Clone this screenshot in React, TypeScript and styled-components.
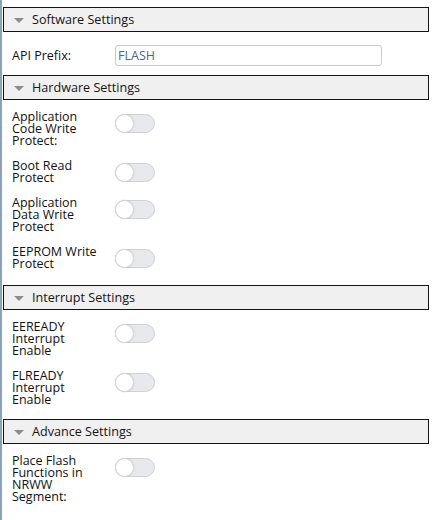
import React from "react";
import styled, { createGlobalStyle } from "styled-components";

const GlobalStyle = createGlobalStyle`
  html, body {
    margin: 0;
    padding: 0;
    background: #ffffff;
  }
  body {
    font-family: "Open Sans", "Noto Sans", sans-serif;
    font-size: 12.5px;
    color: #111111;
  }
`;

const Page = styled.div`
  box-sizing: border-box;
  min-height: 100vh;
  border-left: 2px solid #8da2b9;
  padding: 7px 5px 0 1px;
`;

const Section = styled.section`
  display: flex;
  flex-direction: column;
`;

const Header = styled.div`
  box-sizing: border-box;
  height: 25px;
  display: flex;
  align-items: center;
  gap: 8px;
  padding-left: 10px;
  border: 1px solid #141414;
  background: #f0f0f0;
  color: #151515;
  font-size: 12.6px;
  cursor: pointer;
  user-select: none;
`;

const Caret = styled.span`
  width: 0;
  height: 0;
  border-left: 5px solid transparent;
  border-right: 5px solid transparent;
  border-top: 5px solid #8c8c8c;
  margin-top: 1px;
`;

const Body = styled.div<{ $tail?: number }>`
  display: flex;
  flex-direction: column;
  padding: 4px 0 ${(p) => p.$tail ?? 8}px;
`;

const Row = styled.div<{ $input?: boolean }>`
  display: flex;
  align-items: ${(p) => (p.$input ? "center" : "flex-start")};
  padding: ${(p) => (p.$input ? "9px 0 1px" : "7px 0 6px")};
`;

const Label = styled.label`
  box-sizing: border-box;
  flex: 0 0 112px;
  padding: 0 14px 0 9px;
  line-height: 12px;
  color: #111111;
`;

const TextInput = styled.input`
  box-sizing: border-box;
  width: 267px;
  height: 21px;
  padding: 0 2px;
  border: 1px solid #c9c9c9;
  border-radius: 3px;
  background: #ffffff;
  font-family: inherit;
  font-size: 12.5px;
  color: #4b6886;
  outline: none;
`;

const Switch = styled.label`
  position: relative;
  display: inline-block;
  flex: 0 0 auto;
  width: 40px;
  height: 19px;
  margin-top: 3px;
  cursor: pointer;

  input {
    position: absolute;
    opacity: 0;
    width: 0;
    height: 0;
  }
`;

const Track = styled.span`
  position: absolute;
  inset: 0;
  box-sizing: border-box;
  border: 1px solid #cfd1d4;
  border-radius: 10px;
  background: #e7e9ec;
  transition: background 0.2s;

  &::before {
    content: "";
    position: absolute;
    top: -1px;
    left: -1px;
    width: 19px;
    height: 19px;
    box-sizing: border-box;
    border-radius: 50%;
    background: #ffffff;
    border: 1px solid #d6d6d6;
    box-shadow: 0 0 2px rgba(0, 0, 0, 0.12);
    transition: transform 0.2s;
  }

  input:checked + & {
    background: #6a9bd1;
  }

  input:checked + &::before {
    transform: translateX(21px);
  }
`;

const Toggle = ({ id }: { id: string }) => (
  <Switch htmlFor={id}>
    <input id={id} type="checkbox" />
    <Track />
  </Switch>
);

type Item = { id: string; label: string };

const sections: { title: string; tail: number; items: Item[] }[] = [
  {
    title: "Hardware Settings",
    tail: 9,
    items: [
      { id: "appCodeWp", label: "Application Code Write Protect:" },
      { id: "bootRp", label: "Boot Read Protect" },
      { id: "appDataWp", label: "Application Data Write Protect" },
      { id: "eepromWp", label: "EEPROM Write Protect" },
    ],
  },
  {
    title: "Interrupt Settings",
    tail: 7,
    items: [
      { id: "eeready", label: "EEREADY Interrupt Enable" },
      { id: "flready", label: "FLREADY Interrupt Enable" },
    ],
  },
  {
    title: "Advance Settings",
    tail: 8,
    items: [{ id: "nrww", label: "Place Flash Functions in NRWW Segment:" }],
  },
];

const App = () => {
  return (
    <>
      <GlobalStyle />
      <Page>
        <Section>
          <Header>
            <Caret />
            Software Settings
          </Header>
          <Body>
            <Row $input>
              <Label htmlFor="apiPrefix">API Prefix:</Label>
              <TextInput id="apiPrefix" type="text" defaultValue="FLASH" />
            </Row>
          </Body>
        </Section>
        {sections.map((s) => (
          <Section key={s.title}>
            <Header>
              <Caret />
              {s.title}
            </Header>
            <Body $tail={s.tail}>
              {s.items.map((it) => (
                <Row key={it.id}>
                  <Label htmlFor={it.id}>{it.label}</Label>
                  <Toggle id={it.id} />
                </Row>
              ))}
            </Body>
          </Section>
        ))}
      </Page>
    </>
  );
};

export default App;
